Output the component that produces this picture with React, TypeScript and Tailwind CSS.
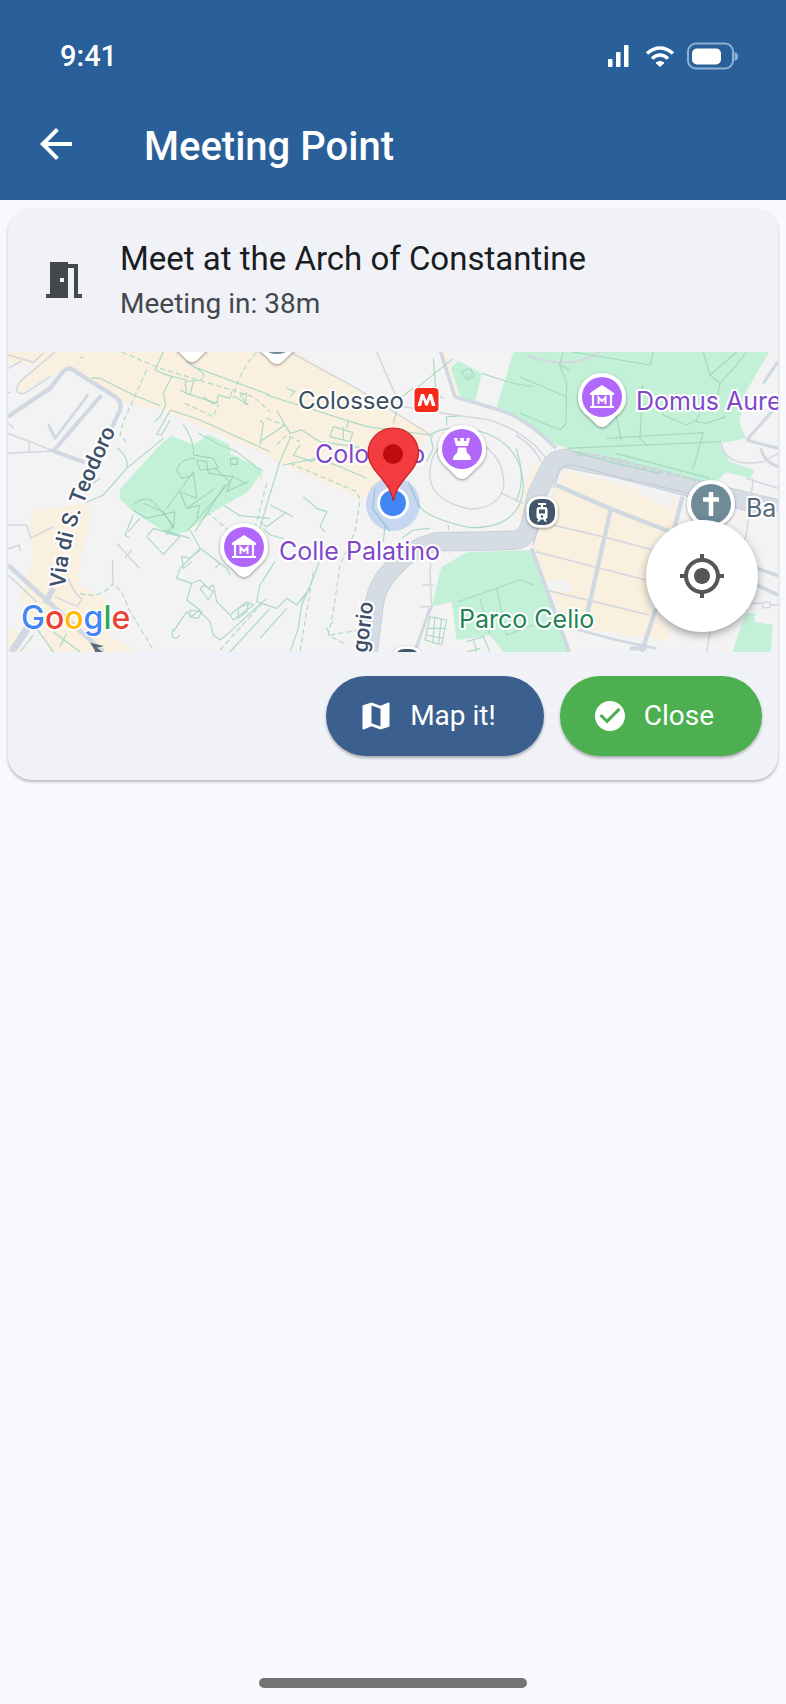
import React from "react";
import {
  MdArrowBack,
  MdCheckCircle,
  MdMap,
  MdMeetingRoom,
  MdMyLocation,
} from "react-icons/md";

function StatusBar() {
  return (
    <div className="flex h-28 items-center justify-between pr-12 pl-15 text-white">
      <span className="text-[29px] leading-9 font-medium">9:41</span>
      <svg className="h-7 w-[132px]" viewBox="0 0 132 28" aria-hidden="true">
        <g fill="#fff">
          <rect x="2" y="17" width="4.500" height="8" rx="1" />
          <rect x="10" y="10" width="4.500" height="15" rx="1" />
          <rect x="18" y="3" width="4.500" height="22" rx="1" />
          <path d="M54 24.500 L50 20.800 Q54 17.800 58 20.800 Z" stroke="#fff" strokeWidth="1" strokeLinejoin="round" />
          <rect x="86" y="6.500" width="29" height="16" rx="5" />
        </g>
        <g fill="none" stroke="#fff" strokeWidth="3.600">
          <path d="M41 11.500 Q54 0.500 67 11.500" />
          <path d="M46 16.500 Q54 9.500 62 16.500" />
        </g>
        <rect x="82" y="1.500" width="45" height="25" rx="8" fill="none" stroke="#8fb0d3" strokeWidth="2" />
        <path d="M128.500 10 Q132 11 132 14.500 Q132 18 128.500 19 Z" fill="#8fb0d3" />
      </svg>
    </div>
  );
}

function PoiPin({ x, y, color, children }: { x: number; y: number; color: string; children?: React.ReactNode }) {
  return (
    <g transform={`translate(${x} ${y})`}>
      <path
        d="M0 -24 A24 24 0 0 1 24 0 C24 10 19 15 13 20 L5 28 Q0 32 -5 28 L-13 20 C-19 15 -24 10 -24 0 A24 24 0 0 1 0 -24 Z"
        fill="#fff"
        filter="url(#pinShadow)"
      />
      <circle r="20" fill={color} />
      {children}
    </g>
  );
}

function MuseumGlyph() {
  return (
    <g>
      <path d="M-12 -4 L0 -12 L12 -4 V-2 H-12 Z" fill="#fff" />
      <path d="M-9 -2 V9 M9 -2 V9 M-12 10 H12" stroke="#fff" strokeWidth="2.200" fill="none" />
      <path d="M-3.500 7 V0.500 L0 4 L3.500 0.500 V7" stroke="#fff" strokeWidth="2" fill="none" />
    </g>
  );
}

function TransitBadge({ x, y }: { x: number; y: number }) {
  return (
    <g transform={`translate(${x} ${y})`}>
      <rect x="-15.500" y="-15.500" width="31" height="31" rx="12" fill="#fff" filter="url(#pinShadow)" />
      <rect x="-13" y="-13" width="26" height="26" rx="10" fill="#41566b" />
      <path d="M-4 -8 H4 M0 -8 V-4" stroke="#fff" strokeWidth="2" />
      <path d="M-3 -5 H3 Q5.500 -5 5.500 -2 V5 Q5.500 7 3.500 7 L5 9.500 H2.500 L1.500 7.500 H-1.500 L-2.500 9.500 H-5 L-3.500 7 Q-5.500 7 -5.500 5 V-2 Q-5.500 -5 -3 -5 Z" fill="#fff" />
      <rect x="-3" y="-2.500" width="6" height="4" fill="#41566b" />
      <circle cy="4.500" r="1.300" fill="#41566b" />
    </g>
  );
}

function Terrain() {
  return (
    <g transform="translate(-8 -7) scale(0.33333)" strokeLinejoin="round">
      <g fill="#f9f0df">
        <path d="M24 21H890L1070 130L1290 262L1240 350L1140 410L1085 465L1060 450L840 355L800 330L500 200L380 175L205 65L150 95L60 145L50 115L110 60L24 50Z" />
        <path d="M100 495L265 475L270 540L245 620L235 720L320 762L300 850L410 921H150L60 750L100 640L90 540Z" />
        <path d="M24 850L70 860L60 921H24Z" />
        <path d="M1698 375L2028 465L2018 560L1960 590L1948 780L2010 860L2003 885L1718 850L1640 720L1598 600L1663 430Z" />
        <path d="M1548 490L1608 350L1620 380L1588 480L1560 530Z" />
        <path d="M1325 21H1340L1385 150H1370Z" />
      </g>
      <path d="M1900 425L2020 465L2010 490L1960 470ZM1640 710L1700 700L1720 740L1650 735Z" fill="#f3f3f4" />
      <g fill="#c3f1d8">
        <path d="M515 272L580 300L625 268L690 300V325L790 375L745 440L640 500L560 560L510 570L400 500L358 460L362 430L485 295Z" />
        <path d="M1352 70L1375 48L1445 85L1425 170L1380 152Z" />
        <path d="M1540 21H2308L2238 140L2218 230L2238 280L2163 295L2188 350L2263 375L2253 400L2178 382L2148 410H2078L1748 320L1668 300L1580 230L1490 185Z" />
        <path d="M1325 665L1400 622L1600 615L1635 720L1658 790L1710 921H1510L1470 870L1370 885L1355 770L1295 785L1320 680Z" />
        <path d="M2238 805H2266L2263 830L2318 840L2313 921H2198L2213 870Z" />
        <path d="M780 365L785 370V405L780 410Z" />
      </g>

      <g fill="none" stroke="#d3d7e1" strokeWidth="4.500">
        <path d="M24 30L100 52L130 25M165 21L60 110Q35 150 75 145L150 95M24 70L65 48M24 235L42 250M24 145L34 140" />
        <path d="M24 265L90 290L160 318L24 325M88 290V320" />
        <path d="M24 540L80 540L92 580L160 545M24 612L58 600L60 618M24 690L110 770" />
        <path d="M350 595L418 670M375 640L395 615M338 645V715" />
        <path d="M205 700Q215 735 245 762L232 785L165 755" />
        <path d="M870 21L1070 130L1300 275M1130 21L1195 170" />
        <path d="M1210 185L1330 205L1470 225Q1600 270 1650 360" />
        <path d="M1260 600Q1300 620 1290 680L1295 790L1240 921" />
        <path d="M1268 720H1300M1260 785H1295" />
        <path d="M1548 270Q1600 300 1630 360" />
        <path d="M1580 30Q1700 80 1800 21" strokeWidth="7" />
        <path d="M1658 540L1828 580L1958 615M1608 620L1938 705M1638 735L1948 810" />
        <path d="M2238 400L2334 430M2260 400L2240 560L2225 640M2163 295Q2180 370 2290 350L2334 325" />
        <path d="M2250 775H2290M2310 780H2334M2288 772H2310V788H2288Z" />
        <path d="M2130 860L2120 921" />
      </g>

      <g fill="none" stroke="#d1d8e1">
        <path d="M24 215L150 130L185 85Q205 58 230 82L345 155Q368 170 360 195L320 280" strokeWidth="13" />
        <path d="M305 150L160 318L255 352" strokeWidth="12" />
        <path d="M265 148L165 280L145 238" strokeWidth="8" />
        <path d="M24 660L150 775L310 921" strokeWidth="14" />
        <path d="M85 845L35 921" strokeWidth="22" />
        <path d="M205 500L200 530M160 730L135 775" strokeWidth="18" />
        <path d="M1322 21L1365 155L1480 190Q1570 210 1668 310" strokeWidth="11" />
        <path d="M1290 790L1245 921" strokeWidth="9" />
      </g>
      <path d="M1105 921L1120 800Q1125 720 1180 670Q1230 610 1310 590Q1450 590 1548 585Q1580 580 1590 540L1610 450L1650 370Q1670 330 1720 345L1850 370L2080 430L2334 492" fill="none" stroke="#c6ced9" strokeWidth="58" />
      <path d="M1105 921L1120 800Q1125 720 1180 670Q1230 610 1310 590Q1450 590 1548 585Q1580 580 1590 540L1610 450L1650 370Q1670 330 1720 345L1850 370L2080 430L2334 492" fill="none" stroke="#d5dce4" strokeWidth="53" />
      <path d="M1660 430L1678 380Q1690 355 1730 362L1850 395L2070 445M1600 600L1620 520" fill="none" stroke="#c4cdd8" strokeWidth="4" />
      <g fill="none" stroke="#d0d8e1" strokeWidth="13">
        <path d="M1668 420L1828 490L2010 560M1833 490L1763 800M2048 455L2020 560" />
        <path d="M1595 610L1650 760L1708 921" strokeWidth="11" />
        <path d="M1718 850L1850 885L1968 910" strokeWidth="8" />
        <path d="M1968 790L1925 921M1890 910H1940" />
        <path d="M2240 285L2334 180M2240 285L2334 310M2283 310Q2290 350 2334 365M2290 115L2334 50" strokeWidth="9" />
        <path d="M2270 670L2334 692M2270 720L2334 750" strokeWidth="11" />
      </g>

      <g fill="none" stroke="#acd9c6" strokeWidth="3.500">
        <path d="M275 98L300 100L400 150L480 182M515 95L490 145L497 180L480 215L465 230M500 215L512 195L600 225L810 320" />
        <path d="M510 225L485 270L470 268L500 215M490 280L380 370L310 450L255 473M352 308Q390 345 380 370" />
        <path d="M490 21L465 75L500 90L560 105M465 75L515 95M560 50L605 80Q620 95 600 105L555 110M580 65L810 150M555 110L560 145L650 175L655 150L690 160L695 140" />
        <path d="M540 135L570 150L580 110M610 155L640 178L655 170M705 155L745 180L720 150L740 145L735 180" />
        <path d="M780 300L790 235L780 225M250 35L240 40M550 238Q585 290 580 330M595 265L660 300L710 320L780 375" />
        <path d="M670 480L720 512L810 520M570 555L600 610L540 670L530 700L575 715L560 765L600 795L575 815L560 800L520 860M600 610L680 670L690 690M600 615L570 640L545 635L550 670L575 650" />
        <path d="M575 715L600 705L625 730L640 720L650 770L690 810L740 770L760 780L700 825L690 810M600 730L625 765L640 740L612 720ZM600 800L630 830L640 870L660 885L690 860L800 760" />
        <path d="M570 795L605 800L595 820L570 815ZM520 850Q510 880 530 880L540 870M715 790L745 775L740 800L715 820ZM690 921L810 790M640 640L660 655L645 670" />
        <path d="M110 850L160 921M160 860L240 921M200 865L180 905M100 870L60 921M255 430L300 400" />
        <path d="M400 510L375 570L390 580M420 520L385 560M460 550L440 575L490 628L540 575L460 550M490 555L570 580" />
      </g>
      <g fill="none" stroke="#99cdb5" strokeWidth="3">
        <path d="M580 330L640 340L655 370L600 375L590 345L620 350L625 385L700 395L735 415M692 340H712V358H692ZM645 370L690 410L560 560M585 340Q540 340 530 375L545 400L580 390" />
        <path d="M580 380L500 490M580 380L590 460L540 440L560 490L600 480L590 520M645 430L560 490M675 420L585 560" />
        <path d="M400 480Q430 450 460 470L520 540L500 570M400 495L440 520L525 500L520 550L490 500L430 475M700 390L680 440L745 410" />
      </g>
      <g fill="none" stroke="#acd9c6" strokeWidth="3.500">
        <path d="M800 150L1100 245L1290 270M830 195L855 240L780 290M855 240L870 265L905 255L960 290L1100 310M870 280L840 350L800 480L780 550" />
        <path d="M1000 245L990 275L1050 290L1058 262ZM1030 245V282M1045 225L1040 250M1180 235L1200 160L1240 130" />
        <path d="M850 360L950 340L1020 365L1100 400M900 300L880 330L935 350L950 340M860 130L885 140L870 155" />
        <path d="M810 480L880 515M860 500L800 545L780 530M790 550L810 570L850 580M910 455L950 490L980 500L960 545L975 560" />
        <path d="M825 650L780 720L770 770L830 790L860 760L890 780L930 730L900 770M780 880L860 790M1155 540L1150 590M870 921L895 850L905 780L940 700L975 600" />
        <path d="M1125 430L1118 490L1170 560M1225 410L1260 490M1205 580L1240 555L1290 550" />
        <path d="M1360 40L1255 125L1245 150L1310 165L1300 40M1255 125L1330 160M1340 240V215L1380 213" />
        <path d="M1385 80L1400 105L1425 95L1410 70ZM1398 85L1405 100L1415 85" />
        <path d="M1445 85L1540 115L1600 125" />
        <path d="M1290 815L1340 825L1325 900L1275 885ZM1305 815L1298 895M1325 820L1315 898M1285 850H1335M1280 870L1330 880" />
        <path d="M1400 890L1450 875L1470 921M1420 880L1430 921M1440 910L1400 921" />
        <path d="M1290 270Q1350 230 1460 265Q1570 310 1570 430Q1560 550 1410 548Q1280 520 1255 480M1290 270L1300 310L1280 350" />
        <path d="M1548 310Q1580 400 1548 470M1345 540V555" />
        <path d="M1375 770L1560 705L1600 720M1490 730L1520 870L1600 840M1440 760L1470 870" />
      </g>
      <path d="M1400 280Q1510 310 1512 420Q1500 490 1410 492Q1300 470 1290 400Q1285 320 1340 290M1505 445L1570 475" fill="none" stroke="#cfd5de" strokeWidth="4" />
      <g fill="none" stroke="#a3dabc" strokeWidth="3.500">
        <path d="M1560 95L1698 155M1678 60L1700 110L1698 235L1680 255L1560 205M1710 75L1678 60L1690 21M1718 21L1950 60L1960 21" />
        <path d="M1848 210L1865 290M1928 120L1920 280L1940 300M1820 280L2110 263L2078 375M1700 310L2163 290M1718 320L1848 355L1980 385M1848 325L2130 400" />
        <path d="M1950 150L1990 210L2060 240L2090 225L2110 180M2110 21L2130 90L2160 115L2210 60L2240 21M2160 115L2150 170M2130 90L2210 21M2088 230L2118 235L2178 215" />
      </g>
      <g fill="none" stroke="#b0d9c8" strokeWidth="3.500" strokeDasharray="16 9">
        <path d="M365 21L480 70L760 155L810 200M440 75L370 230L360 270L378 290M555 175L640 215L655 180M770 21Q710 90 700 160" />
        <path d="M240 745Q300 765 340 715Q370 740 385 790L460 915M620 500L690 560M800 415L760 570" />
        <path d="M660 915L790 770M870 355L1070 440L1080 465L1065 560L1020 660L1000 800L985 870L1040 900M940 680L900 921M1000 830L980 850L990 870L1080 855" />
        <path d="M800 220L850 240M830 300L860 270L900 290M1730 330L1820 340L2100 410" />
      </g>
      <path d="M270 893L312 903L290 908L308 921H285L284 915Z" fill="#5c6b7c" />
    </g>
  );
}

function MapView() {
  return (
    <div className="relative h-75 w-full overflow-hidden bg-[#f3f3f4]">
      <svg
        className="block h-full w-full"
        viewBox="0 0 770 300"
        preserveAspectRatio="xMidYMid slice"
        role="img"
        aria-label="Map around the Colosseum"
      >
        <defs>
          <filter id="pinShadow" x="-30%" y="-30%" width="160%" height="160%">
            <feDropShadow dx="0" dy="1" stdDeviation="1.500" floodColor="#000" floodOpacity="0.45" />
          </filter>
          <path id="teodoro" d="M57 236 C61 185 72 155 103 89 L124 44" />
          <path id="gregorio" d="M359 301 L368 230" />
        </defs>

        <Terrain />

        <PoiPin x={184} y={-20} color="#b267fb" />
        <PoiPin x={269} y={-18} color="#6f8b98" />
        <PoiPin x={236} y={195} color="#b267fb">
          <MuseumGlyph />
        </PoiPin>
        <PoiPin x={594} y={45} color="#b267fb">
          <MuseumGlyph />
        </PoiPin>
        <PoiPin x={454} y={97} color="#b267fb">
          <path d="M-8 -11 H-4.500 V-8 H-2 V-11 H2 V-8 H4.500 V-11 H8 L6 -3 H-6 Z" fill="#fff" />
          <path d="M-4 -1.500 H4 L5 4 Q9 6 9 11 H-9 Q-9 6 -5 4 Z" fill="#fff" />
        </PoiPin>
        <PoiPin x={703} y={152} color="#6f8b98">
          <path d="M0 -12 V12 M-8 -4.500 H8" stroke="#fff" strokeWidth="4.500" />
        </PoiPin>
        <TransitBadge x={534} y={160} />
        <TransitBadge x={399} y={310} />

        <g fontFamily="Inter, sans-serif" fontSize="25" stroke="#fff" strokeWidth="4" strokeLinejoin="round" paintOrder="stroke">
          <text x="290" y="57" fill="#3c4f60" fontSize="24">Colosseo</text>
          <text x="307" y="111" fill="#7f48cb">Colosseo</text>
          <text x="271" y="208" fill="#7f48cb">Colle Palatino</text>
          <text x="628" y="58" fill="#7f48cb">Domus Aure</text>
          <text x="451" y="276" fill="#238257">Parco Celio</text>
          <text x="738" y="165" fill="#546a78">Ba</text>
          <g fill="#41506b" fontFamily="Roboto, sans-serif" fontWeight="500" fontSize="22">
            <text>
              <textPath href="#teodoro">Via di S. Teodoro</textPath>
            </text>
            <text>
              <textPath href="#gregorio">gorio</textPath>
            </text>
          </g>
        </g>

        <rect x="405" y="35" width="27" height="27" rx="5" fill="#fff" />
        <rect x="406.500" y="36" width="24" height="24" rx="4" fill="#f32a1c" />
        <path d="M409.500 54 L413 42 H416 L418.500 49 L421 42 H424 L427.500 54 H424 L422 47 L419.800 53.500 H417.200 L415 47 L413 54 Z" fill="#fff" />

        <circle cx="385" cy="152" r="27" fill="#5b8fea" fillOpacity="0.28" />
        <circle cx="385" cy="151" r="16" fill="#fff" />
        <circle cx="385" cy="151" r="13" fill="#4285f4" />
        <path
          d="M385.300 149 C383.500 138 378 132 370 122 C363 114 360 108 360 101 A25.300 25 0 0 1 410.600 101 C410.600 108 407.600 114 400.600 122 C392.600 132 387.100 138 385.300 149 Z"
          fill="#f23c3f"
          stroke="#c5221f"
          strokeWidth="1.200"
        />
        <circle cx="385" cy="102" r="10" fill="#bd0d0d" />

        <text x="13" y="277" fontFamily="Inter, sans-serif" fontSize="32" fontWeight="500" stroke="#fff" strokeWidth="3" paintOrder="stroke">
          <tspan fill="#4285f4">G</tspan>
          <tspan fill="#ea4335">o</tspan>
          <tspan fill="#fbbc05">o</tspan>
          <tspan fill="#4285f4">g</tspan>
          <tspan fill="#34a853">l</tspan>
          <tspan fill="#ea4335">e</tspan>
        </text>
      </svg>
      <button
        type="button"
        aria-label="My location"
        className="absolute right-5 bottom-5 flex size-28 items-center justify-center rounded-full bg-white text-[#565656] shadow-[0_3px_8px_rgba(0,0,0,0.35)]"
      >
        <MdMyLocation className="size-12" />
      </button>
    </div>
  );
}

export default function App() {
  return (
    <div className="flex min-h-screen flex-col bg-[#f8f9ff] font-[Roboto,sans-serif]">
      <header className="bg-[#2a609a] text-white">
        <StatusBar />
        <div className="flex h-22 items-start gap-16 px-8 pt-2">
          <button type="button" aria-label="Back" className="size-12">
            <MdArrowBack className="size-12" />
          </button>
          <h1 className="text-[40px] leading-[54px] font-medium">Meeting Point</h1>
        </div>
      </header>

      <main className="flex-1 p-2">
        <section className="overflow-hidden rounded-3xl bg-[#f1f2f8] shadow-[0_2px_3px_rgba(0,0,0,0.26)]">
          <div className="flex h-36 items-center gap-8 px-8">
            <MdMeetingRoom className="size-12 shrink-0 text-[#44474e]" />
            <div>
              <h2 className="text-[33px] leading-12 text-[#191c20]">Meet at the Arch of Constantine</h2>
              <p className="text-[28px] leading-[42px] text-[#44474e]">Meeting in: 38m</p>
            </div>
          </div>

          <MapView />

          <div className="flex justify-end gap-4 px-4 py-6">
            <button
              type="button"
              className="flex h-20 items-center gap-4 rounded-full bg-[#3b608f] pr-12 pl-8 text-[28px] text-white shadow-[0_2px_3px_rgba(0,0,0,0.3)]"
            >
              <MdMap className="size-9" />
              Map it!
            </button>
            <button
              type="button"
              className="flex h-20 items-center gap-4 rounded-full bg-[#4caf50] pr-12 pl-8 text-[28px] text-white shadow-[0_2px_3px_rgba(0,0,0,0.3)]"
            >
              <MdCheckCircle className="size-9" />
              Close
            </button>
          </div>
        </section>
      </main>

      <footer className="flex justify-center pb-4">
        <div className="h-[10px] w-67 rounded-full bg-[#727474]" />
      </footer>
    </div>
  );
}
